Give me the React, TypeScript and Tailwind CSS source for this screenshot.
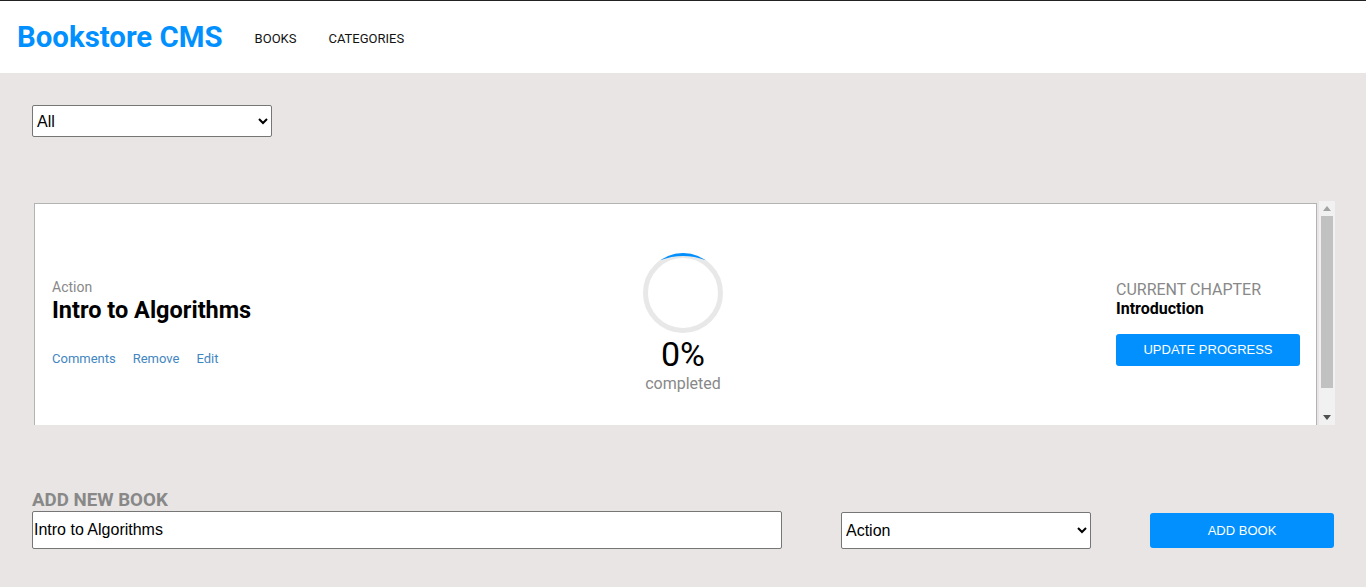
import React from 'react';

const BLUE = '#0290ff';

const ProgressRing: React.FC = () => (
    <svg width="80" height="80" viewBox="0 0 80 80">
        <circle cx="40" cy="40" r="37.5" fill="none" stroke="#e8e8e8" strokeWidth="5" />
        <path d="M17.1 7.3 A40 40 0 0 1 62.9 7.3 A63.7 63.7 0 0 0 17.1 7.3 Z" fill={BLUE} />
    </svg>
);

// classic scrollbar look, drawn since the headless browser hides the real one
const ScrollBar: React.FC = () => (
    <div className="w-[16px] h-full bg-[#f1f1f1] flex flex-col items-center">
        <div className="h-[15px] flex items-center justify-center">
            <svg width="8" height="5" viewBox="0 0 8 5"><path d="M0 5 L4 0 L8 5 Z" fill="#a3a3a3" /></svg>
        </div>
        <div className="w-[12px] h-[172px] bg-[#c1c1c1]" />
        <div className="flex-1" />
        <div className="h-[15px] flex items-center justify-center">
            <svg width="8" height="5" viewBox="0 0 8 5"><path d="M0 0 L8 0 L4 5 Z" fill="#505050" /></svg>
        </div>
    </div>
);

const BookCard: React.FC = () => {
    return (
        <div className="flex items-start mt-[2px] h-[238px] bg-white border border-[#b3b3b3] pl-[17px] pr-[16px]">
            <div className="w-[591px] mt-[75px]">
                <p className="text-[14px] leading-[17px] text-[#888]">Action</p>
                <h2 className="mt-[1px] text-[23.5px] leading-[26px] font-bold text-black whitespace-nowrap">Intro to Algorithms</h2>
                <div className="mt-[28px] flex gap-[17px] text-[13px] leading-[16px] text-[#4386bf]">
                    <button className="cursor-pointer">Comments</button>
                    <button className="cursor-pointer">Remove</button>
                    <button className="cursor-pointer">Edit</button>
                </div>
            </div>
            <div className="w-[80px] mt-[49px] flex flex-col items-center">
                <ProgressRing />
                <p className="mt-[1px] text-[34px] leading-[40px] text-black">0%</p>
                <p className="text-[16px] leading-[20px] text-[#888] whitespace-nowrap">completed</p>
            </div>
            <div className="ml-auto w-[184px] mt-[76px]">
                <p className="text-[16px] leading-[19px] text-[#888] whitespace-nowrap">CURRENT CHAPTER</p>
                <p className="text-[16px] leading-[19px] font-bold text-black">Introduction</p>
                <button className="mt-[16px] w-[184px] h-[32px] rounded-[3px] bg-[#0290ff] text-white text-[13px] font-['Liberation_Sans',Arial,sans-serif]">
                    UPDATE PROGRESS
                </button>
            </div>
        </div>
    );
};

export default function App() {
    return (
        <div className="min-h-screen bg-[#e8e5e4] font-['Roboto',sans-serif] pb-[39px]">
            <header className="border-t border-[#222] bg-white h-[73px] flex items-center pl-[17px]">
                <h1 className="text-[29.4px] font-bold text-[#0290ff] leading-none mt-[2px]">Bookstore CMS</h1>
                <nav className="ml-[32px] flex gap-[32px] text-[13px] text-[#121212] mt-[3px]">
                    <a href="#">BOOKS</a>
                    <a href="#">CATEGORIES</a>
                </nav>
            </header>

            <div className="pl-[32px] pt-[32px]">
                <select className="w-[240px] h-[32px] border border-[#767676] rounded-[2px] bg-white text-[16px] text-black font-['Liberation_Sans',Arial,sans-serif]">
                    <option>All</option>
                </select>
            </div>

            <div className="ml-[34px] mt-[64px] w-[1301px] h-[224px] flex">
                <div className="flex-1 overflow-hidden">
                    <BookCard />
                </div>
                <div className="w-[2px]" />
                <ScrollBar />
            </div>

            <div className="pl-[32px] mt-[65px]">
                <h3 className="text-[18.7px] leading-[21px] font-bold text-[#888]">ADD NEW BOOK</h3>
                <form className="flex items-center font-['Liberation_Sans',Arial,sans-serif]">
                    <input
                        className="w-[750px] h-[38px] border border-[#767676] rounded-[2px] bg-white px-[1px] text-[16px] text-black"
                        defaultValue="Intro to Algorithms"
                    />
                    <select className="ml-[59px] w-[250px] h-[37px] border border-[#767676] rounded-[2px] bg-white text-[16px] text-black">
                        <option>Action</option>
                    </select>
                    <button type="button" className="ml-[59px] w-[184px] h-[35px] rounded-[3px] bg-[#0290ff] text-white text-[13px] pt-[1px]">
                        ADD BOOK
                    </button>
                </form>
            </div>
        </div>
    );
}
